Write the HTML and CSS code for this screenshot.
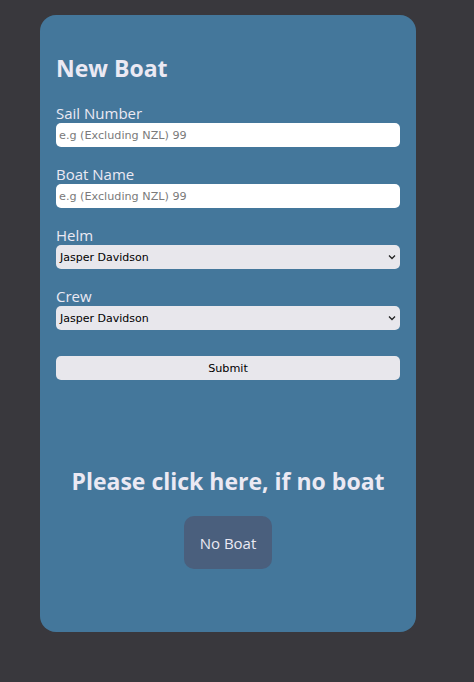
FILE: index.html
```html
<!DOCTYPE html>
<html>
<head>
<meta charset="utf-8">
<link rel="stylesheet" href="styles.css">
</head>
<body>
<div class="card">
  <h1 class="title">New Boat</h1>
  <form class="form">
    <div class="field">
      <label class="label">Sail Number</label>
      <input class="input" type="text" placeholder="e.g (Excluding NZL) 99">
    </div>
    <div class="field">
      <label class="label">Boat Name</label>
      <input class="input" type="text" placeholder="e.g (Excluding NZL) 99">
    </div>
    <div class="field">
      <label class="label">Helm</label>
      <div class="select"><span>Jasper Davidson</span><svg width="8" height="6" viewBox="0 0 8 6"><path d="M1 1.5 L4 4.5 L7 1.5" fill="none" stroke="#222" stroke-width="1.3"/></svg></div>
    </div>
    <div class="field">
      <label class="label">Crew</label>
      <div class="select"><span>Jasper Davidson</span><svg width="8" height="6" viewBox="0 0 8 6"><path d="M1 1.5 L4 4.5 L7 1.5" fill="none" stroke="#222" stroke-width="1.3"/></svg></div>
    </div>
    <button class="submit" type="button">Submit</button>
  </form>
  <h2 class="noboat-title">Please click here, if no boat</h2>
  <div class="noboat-row"><button class="noboat" type="button">No Boat</button></div>
</div>
</body>
</html>
```
FILE: styles.css
```css
* { box-sizing: border-box; }
body {
  margin: 0;
  background: #39383d;
  font-family: "Open Sans", "Noto Sans", sans-serif;
  color: #ebe9f3;
}
.card {
  margin: 15px 0 0 40px;
  width: 376px;
  height: 617px;
  background: #44779b;
  border-radius: 16px;
  padding: 37px 16px 0;
}
.title {
  margin: 0 0 19px;
  font-size: 23px;
  line-height: 32px;
  font-weight: 700;
}
.form {
  display: flex;
  flex-direction: column;
  gap: 17px;
}
.field {
  display: flex;
  flex-direction: column;
}
.label {
  font-size: 15px;
  line-height: 20px;
}
.input {
  height: 24px;
  border: none;
  border-radius: 5px;
  background: #fff;
  padding: 0 3px;
  font-family: "DejaVu Sans", sans-serif;
  font-size: 11.2px;
  outline: none;
}
.input::placeholder { color: #7a7a7a; }
.select {
  height: 24px;
  border-radius: 5px;
  background: #e8e7ec;
  padding: 0 4px 0 4px;
  display: flex;
  align-items: center;
  justify-content: space-between;
  font-family: "DejaVu Sans", sans-serif;
  font-size: 11px;
  color: #000;
}
.submit {
  margin-top: 9px;
  height: 24px;
  border: none;
  border-radius: 5px;
  background: #e8e7ec;
  font-family: "DejaVu Sans", sans-serif;
  font-size: 11.2px;
  color: #000;
  padding: 0;
}
.noboat-title {
  margin: 85px 0 19px;
  text-align: center;
  font-size: 23px;
  line-height: 32px;
  font-weight: 700;
}
.noboat-row {
  display: flex;
  justify-content: center;
}
.noboat {
  width: 88px;
  height: 53px;
  border: none;
  border-radius: 10px;
  background: #4a5f7d;
  color: #ebe9f3;
  font-family: "Open Sans", sans-serif;
  font-size: 15px;
  padding: 0;
}
```
